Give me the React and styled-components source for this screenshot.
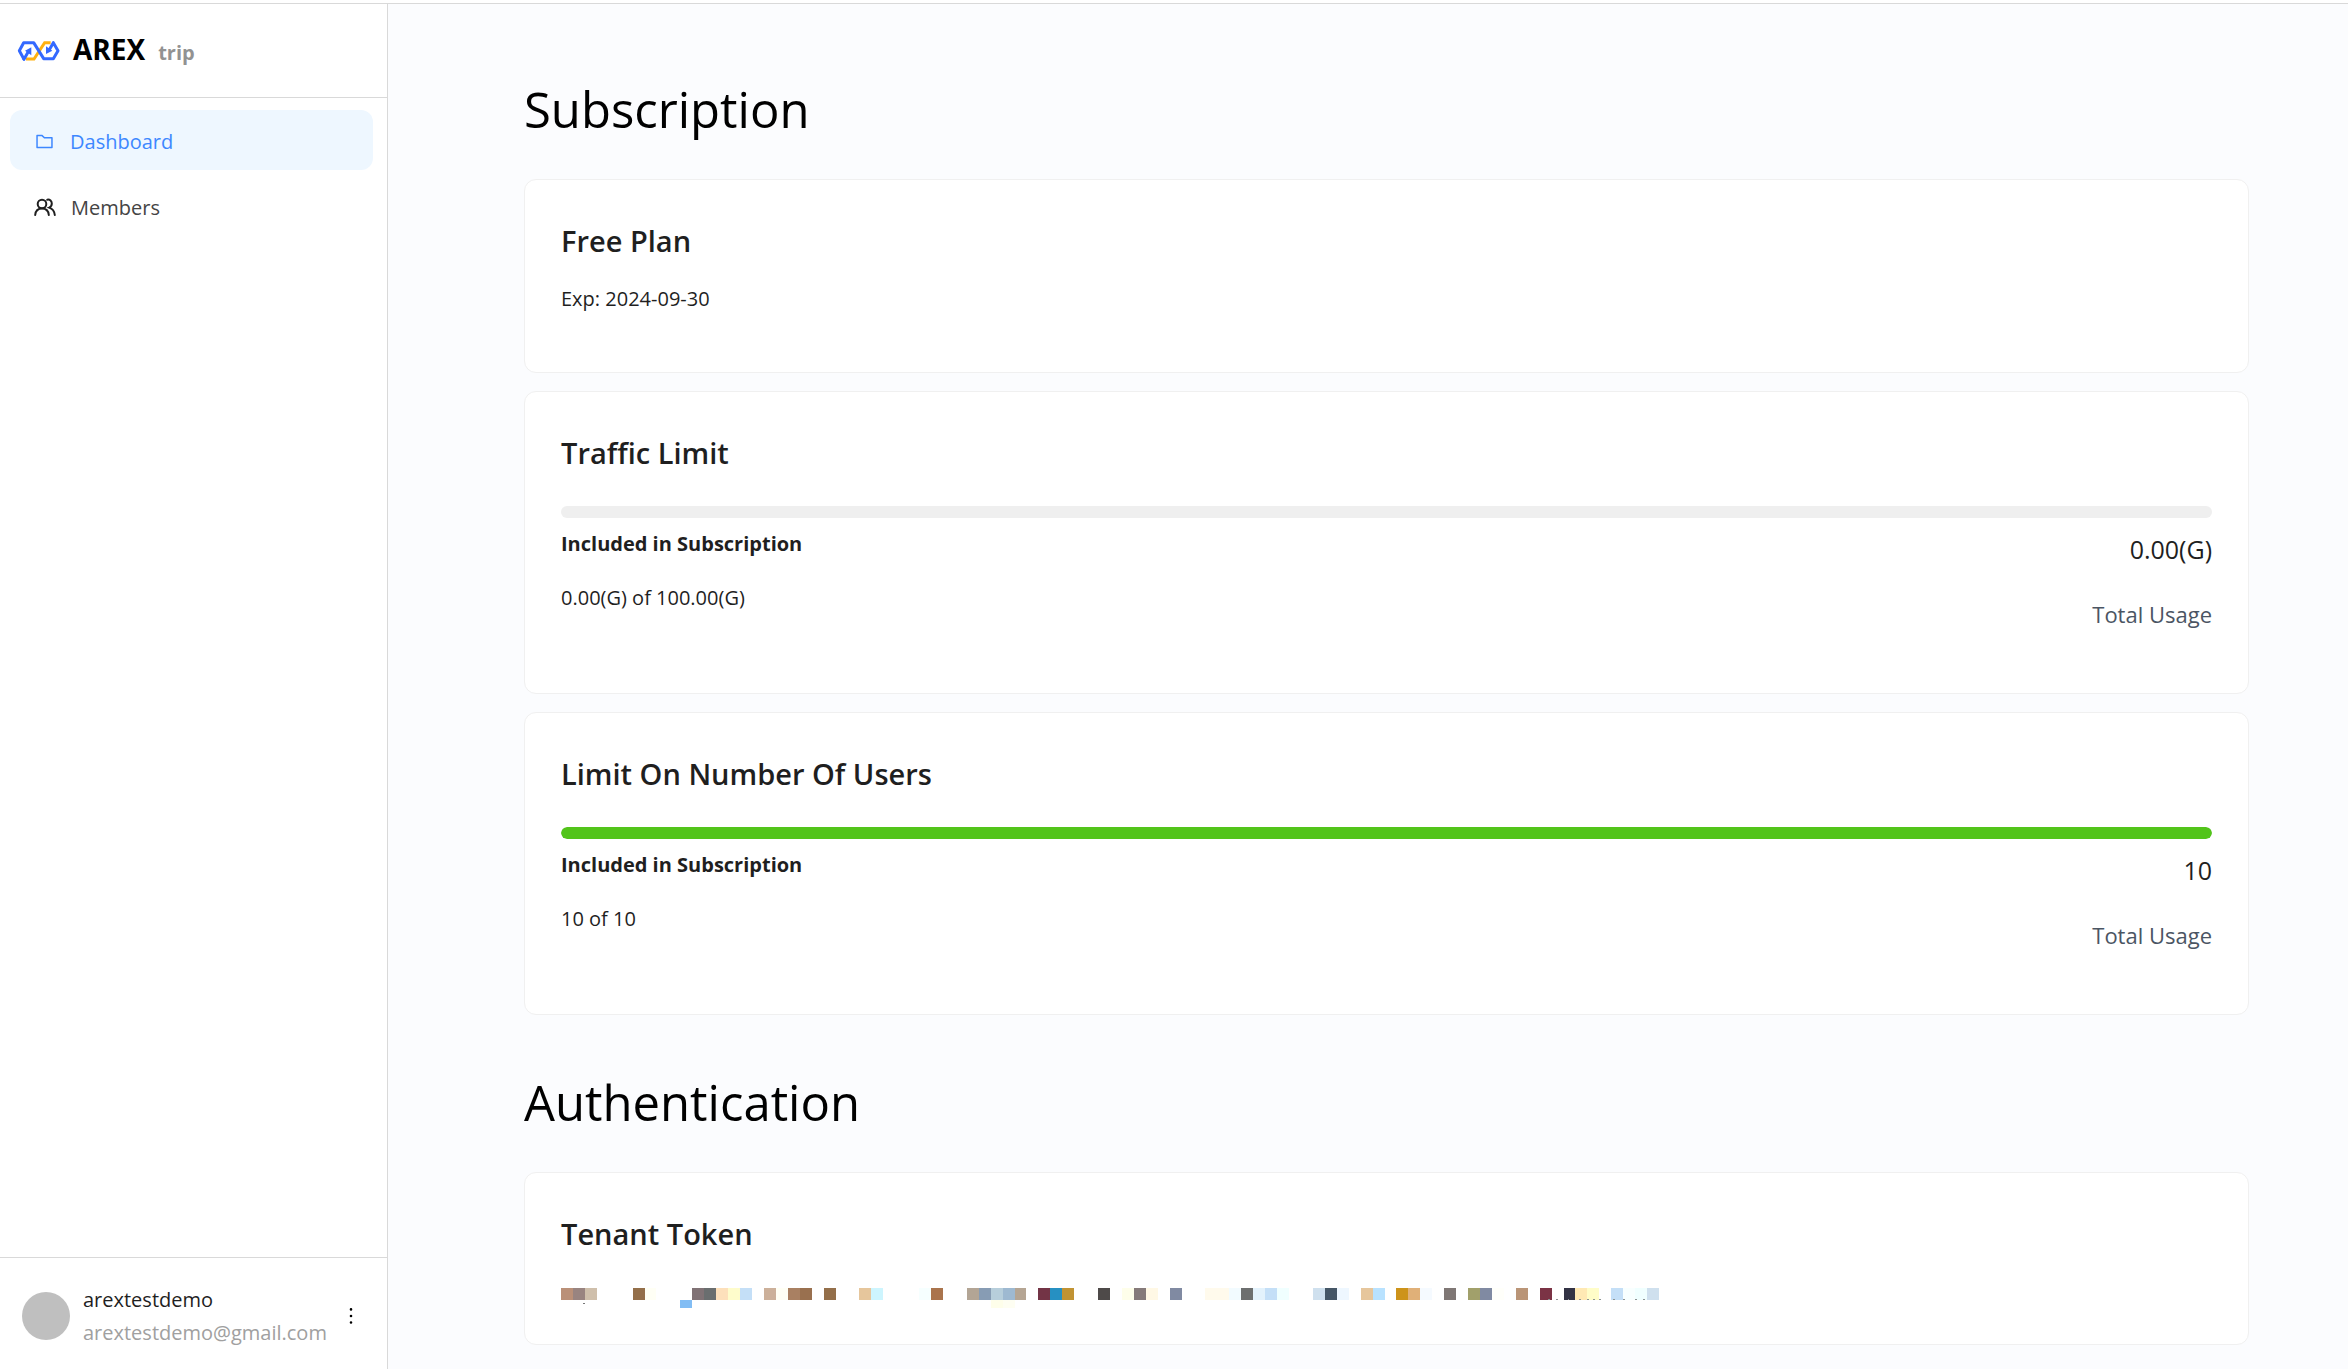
import React from "react";
import styled, { createGlobalStyle } from "styled-components";
import { AiOutlineFolder, AiOutlineMore } from "react-icons/ai";

const GlobalStyle = createGlobalStyle`
  * { box-sizing: border-box; }
  body {
    margin: 0;
    background: #ffffff;
    color: #1f1f1f;
    font-family: "Open Sans", "Noto Sans", sans-serif;
    font-size: 20px;
    line-height: 33px;
  }
  h1, h2, p, ul { margin: 0; padding: 0; }
`;

const Page = styled.div`
  display: flex;
  height: 100vh;
  padding-top: 3px;
`;

const Sidebar = styled.aside`
  display: flex;
  flex-direction: column;
  flex: none;
  width: 388px;
  border-top: 1px solid #d9d9d9;
  border-right: 1px solid #d9d9d9;
`;

const Brand = styled.header`
  display: flex;
  align-items: center;
  height: 94px;
  padding: 0 17px;
  border-bottom: 1px solid #d9d9d9;
`;

const BrandText = styled.div`
  display: flex;
  align-items: baseline;
  gap: 13px;
  padding-left: 13px;
`;

const BrandName = styled.strong`
  color: #000000;
  font-size: 28px;
  font-weight: 700;
`;

const TenantName = styled.span`
  color: #929292;
  font-size: 20px;
  font-weight: 700;
`;

const Menu = styled.nav`
  display: flex;
  flex: 1;
  flex-direction: column;
  gap: 6px;
  padding: 12px 14px 12px 10px;
`;

const MenuItem = styled.a`
  display: flex;
  align-items: center;
  gap: 15px;
  height: 60px;
  padding: 2px 24px 0;
  border-radius: 12px;
  background: ${(p) => (p.$active ? "#eef7ff" : "transparent")};
  color: ${(p) => (p.$active ? "#3d87ff" : "#444444")};
  text-decoration: none;

  svg { color: ${(p) => (p.$active ? "#3d87ff" : "#1f1f1f")}; }
`;

const Account = styled.footer`
  display: flex;
  align-items: center;
  height: 112px;
  padding: 4px 22px 0;
  border-top: 1px solid #d9d9d9;
`;

const Avatar = styled.span`
  flex: none;
  width: 48px;
  height: 48px;
  border-radius: 50%;
  background: #bfbfbf;
`;

const AccountText = styled.div`
  flex: 1;
  padding-left: 13px;
`;

const AccountEmail = styled.p`
  color: #a0a0a0;
`;

const IconButton = styled.button`
  display: flex;
  align-items: center;
  justify-content: center;
  width: 28px;
  height: 48px;
  padding: 0;
  border: 0;
  background: none;
  color: #000000;
  cursor: pointer;
`;

const Main = styled.main`
  flex: 1;
  min-width: 0;
  overflow: hidden;
  padding: 18px 99px 0 136px;
  border-top: 1px solid #d9d9d9;
  background: #fbfcfe;
`;

const Section = styled.section`
  display: flex;
  flex-direction: column;
  gap: 18px;
  padding-top: 44px;
`;

const SectionTitle = styled.h1`
  padding-bottom: 9px;
  color: #000000;
  font-size: 49px;
  font-weight: 400;
  line-height: 86px;
`;

const Card = styled.article`
  padding: 36px;
  border: 1px solid #f0f0f0;
  border-radius: 12px;
  background: #ffffff;
`;

const CardTitle = styled.h2`
  font-size: 29px;
  font-weight: 600;
  line-height: 50px;
`;

const Expiry = styled.p`
  padding: 16px 0 21px;
`;

const Track = styled.div`
  height: 12px;
  margin: 28px 0 9px;
  overflow: hidden;
  border-radius: 6px;
  background: #efefef;
`;

const Fill = styled.div`
  height: 100%;
  border-radius: 6px;
  background: #52c41a;
`;

const Usage = styled.div`
  display: flex;
  justify-content: space-between;
  padding-bottom: 21px;
`;

const UsageColumn = styled.div`
  display: flex;
  flex-direction: column;
  gap: 21px;
  text-align: ${(p) => (p.$end ? "right" : "left")};
  font-size: ${(p) => (p.$end ? "25px" : "20px")};
  line-height: ${(p) => (p.$end ? "44px" : "33px")};
`;

const UsageLabel = styled.p`
  font-weight: 700;
`;

const TotalLabel = styled.p`
  color: #4b5563;
  font-size: 22px;
`;

const MaskedToken = styled.svg`
  display: block;
  max-width: 100%;
  margin-top: 29px;
`;

const CELL = 12;

// [column, colour, row] of each tile that hides the token
const TILES = [
  [0, "#ba9078"], [1, "#998480"], [2, "#cfbfab"],
  [6, "#946f4a"], [7, "#fffff5"], [10, "#82bdf4", 1],
  [11, "#807275"], [12, "#6a6e6f"], [13, "#fde0bb"], [14, "#fefccb"], [15, "#c4dff7"],
  [17, "#ccb09a"], [18, "#fffff5"], [19, "#a98062"], [20, "#99704f"], [22, "#946f4a"],
  [25, "#e6c69c"], [26, "#cdf5fe"], [30, "#f6ffff"], [31, "#aa744d"],
  [34, "#b3a595"], [35, "#879cb4"], [36, "#b7cedb"], [37, "#9eb9d1"], [38, "#b5a593"],
  [36, "#fefeea", 1], [37, "#fefef2", 1],
  [40, "#733446"], [41, "#2690c2"], [42, "#c19333"], [45, "#4e4a49"],
  [47, "#fefeea"], [48, "#857a7a"], [49, "#fff8e5"], [51, "#808aa2"],
  [54, "#fffaec"], [55, "#fffaec"], [56, "#f2fbff"], [57, "#6d6f6f"],
  [58, "#e3f2fc"], [59, "#c4dff7"], [60, "#f0ffff"],
  [63, "#cfe0ee"], [64, "#455666"], [65, "#eef7ff"], [67, "#e6c69c"], [68, "#b8e2ff"],
  [70, "#cd931a"], [71, "#e0b078"], [72, "#f5faff"], [74, "#7f7775"],
  [76, "#a1a06b"], [77, "#808aa2"], [78, "#fffffa"], [80, "#ba9577"], [82, "#7b3345"],
  [84, "#333345"], [85, "#ffe9b4"], [86, "#fffdc8"],
  [88, "#c4dff7"], [89, "#f8ffff"], [90, "#f0ffff"], [91, "#cfe0ee"],
];

const SPECKS = [992, 1000, 1012, 1024, 1032, 1038, 1044, 1058, 1068, 1080, 1088];

function Logo() {
  return (
    <svg width="43" height="22" viewBox="51 33 129 66" fill="none" aria-hidden="true">
      <path d="M78 90H102L134 41H152" stroke="#ffb111" strokeWidth="9" />
      <path d="M72 91L58 65L71 41H101L131 89H160L174 65L160 41L148 62" stroke="#3469ff" strokeWidth="9" strokeLinejoin="round" />
      <path d="M72 91L86 66" stroke="#3469ff" strokeWidth="9" strokeLinecap="round" />
      <path d="M94 55V79L75 65Z" fill="#3469ff" />
      <path d="M138 75V52L157 65Z" fill="#3469ff" />
    </svg>
  );
}

function MembersIcon() {
  return (
    <svg width="22" height="21" viewBox="0 0 22 21" fill="none" stroke="currentColor" strokeWidth="2" strokeLinecap="round" aria-hidden="true">
      <circle cx="8" cy="7" r="4.3" />
      <path d="M1.2 18C1.6 14 4 11.6 8 11.6S14.4 14 14.8 18" />
      <path d="M13.2 2.7C16 2.2 17.8 4.2 17.8 6.6C17.8 8.6 16.8 9.9 15.2 10.6C18.2 11.6 20.4 14 20.8 18" />
    </svg>
  );
}

function Mosaic() {
  return (
    <MaskedToken width="1098" height="20" viewBox="0 0 1104 20" preserveAspectRatio="none" role="img" aria-label="Hidden token" shapeRendering="crispEdges">
      {TILES.map(([col, color, row = 0]) => (
        <rect key={`${col}-${row}`} x={col * CELL} y={row * CELL} width={CELL} height={row ? 8 : CELL} fill={color} />
      ))}
      {SPECKS.map((x) => (
        <rect key={x} x={x} y="11" width="2" height="1" fill="#8d9494" />
      ))}
      <rect x="22" y="15" width="2" height="1" fill="#777777" />
    </MaskedToken>
  );
}

function UsageCard({ title, percent, included, total }) {
  return (
    <Card>
      <CardTitle>{title}</CardTitle>
      <Track role="progressbar" aria-label={title} aria-valuenow={percent} aria-valuemin={0} aria-valuemax={100}>
        <Fill style={{ width: `${percent}%` }} />
      </Track>
      <Usage>
        <UsageColumn>
          <UsageLabel>Included in Subscription</UsageLabel>
          <p>{included}</p>
        </UsageColumn>
        <UsageColumn $end>
          <p>{total}</p>
          <TotalLabel>Total Usage</TotalLabel>
        </UsageColumn>
      </Usage>
    </Card>
  );
}

export default function App() {
  return (
    <>
      <GlobalStyle />
      <Page>
        <Sidebar>
          <Brand>
            <Logo />
            <BrandText>
              <BrandName>AREX</BrandName>
              <TenantName>trip</TenantName>
            </BrandText>
          </Brand>
          <Menu>
            <MenuItem href="#dashboard" $active aria-current="page">
              <AiOutlineFolder size={21} />
              Dashboard
            </MenuItem>
            <MenuItem href="#members">
              <MembersIcon />
              Members
            </MenuItem>
          </Menu>
          <Account>
            <Avatar />
            <AccountText>
              <p>arextestdemo</p>
              <AccountEmail>arextestdemo@gmail.com</AccountEmail>
            </AccountText>
            <IconButton type="button" aria-label="More">
              <AiOutlineMore size={24} />
            </IconButton>
          </Account>
        </Sidebar>
        <Main>
          <Section>
            <SectionTitle>Subscription</SectionTitle>
            <Card>
              <CardTitle>Free Plan</CardTitle>
              <Expiry>Exp: 2024-09-30</Expiry>
            </Card>
            <UsageCard title="Traffic Limit" percent={0} included="0.00(G) of 100.00(G)" total="0.00(G)" />
            <UsageCard title="Limit On Number Of Users" percent={100} included="10 of 10" total="10" />
          </Section>
          <Section>
            <SectionTitle>Authentication</SectionTitle>
            <Card>
              <CardTitle>Tenant Token</CardTitle>
              <Mosaic />
            </Card>
          </Section>
        </Main>
      </Page>
    </>
  );
}
